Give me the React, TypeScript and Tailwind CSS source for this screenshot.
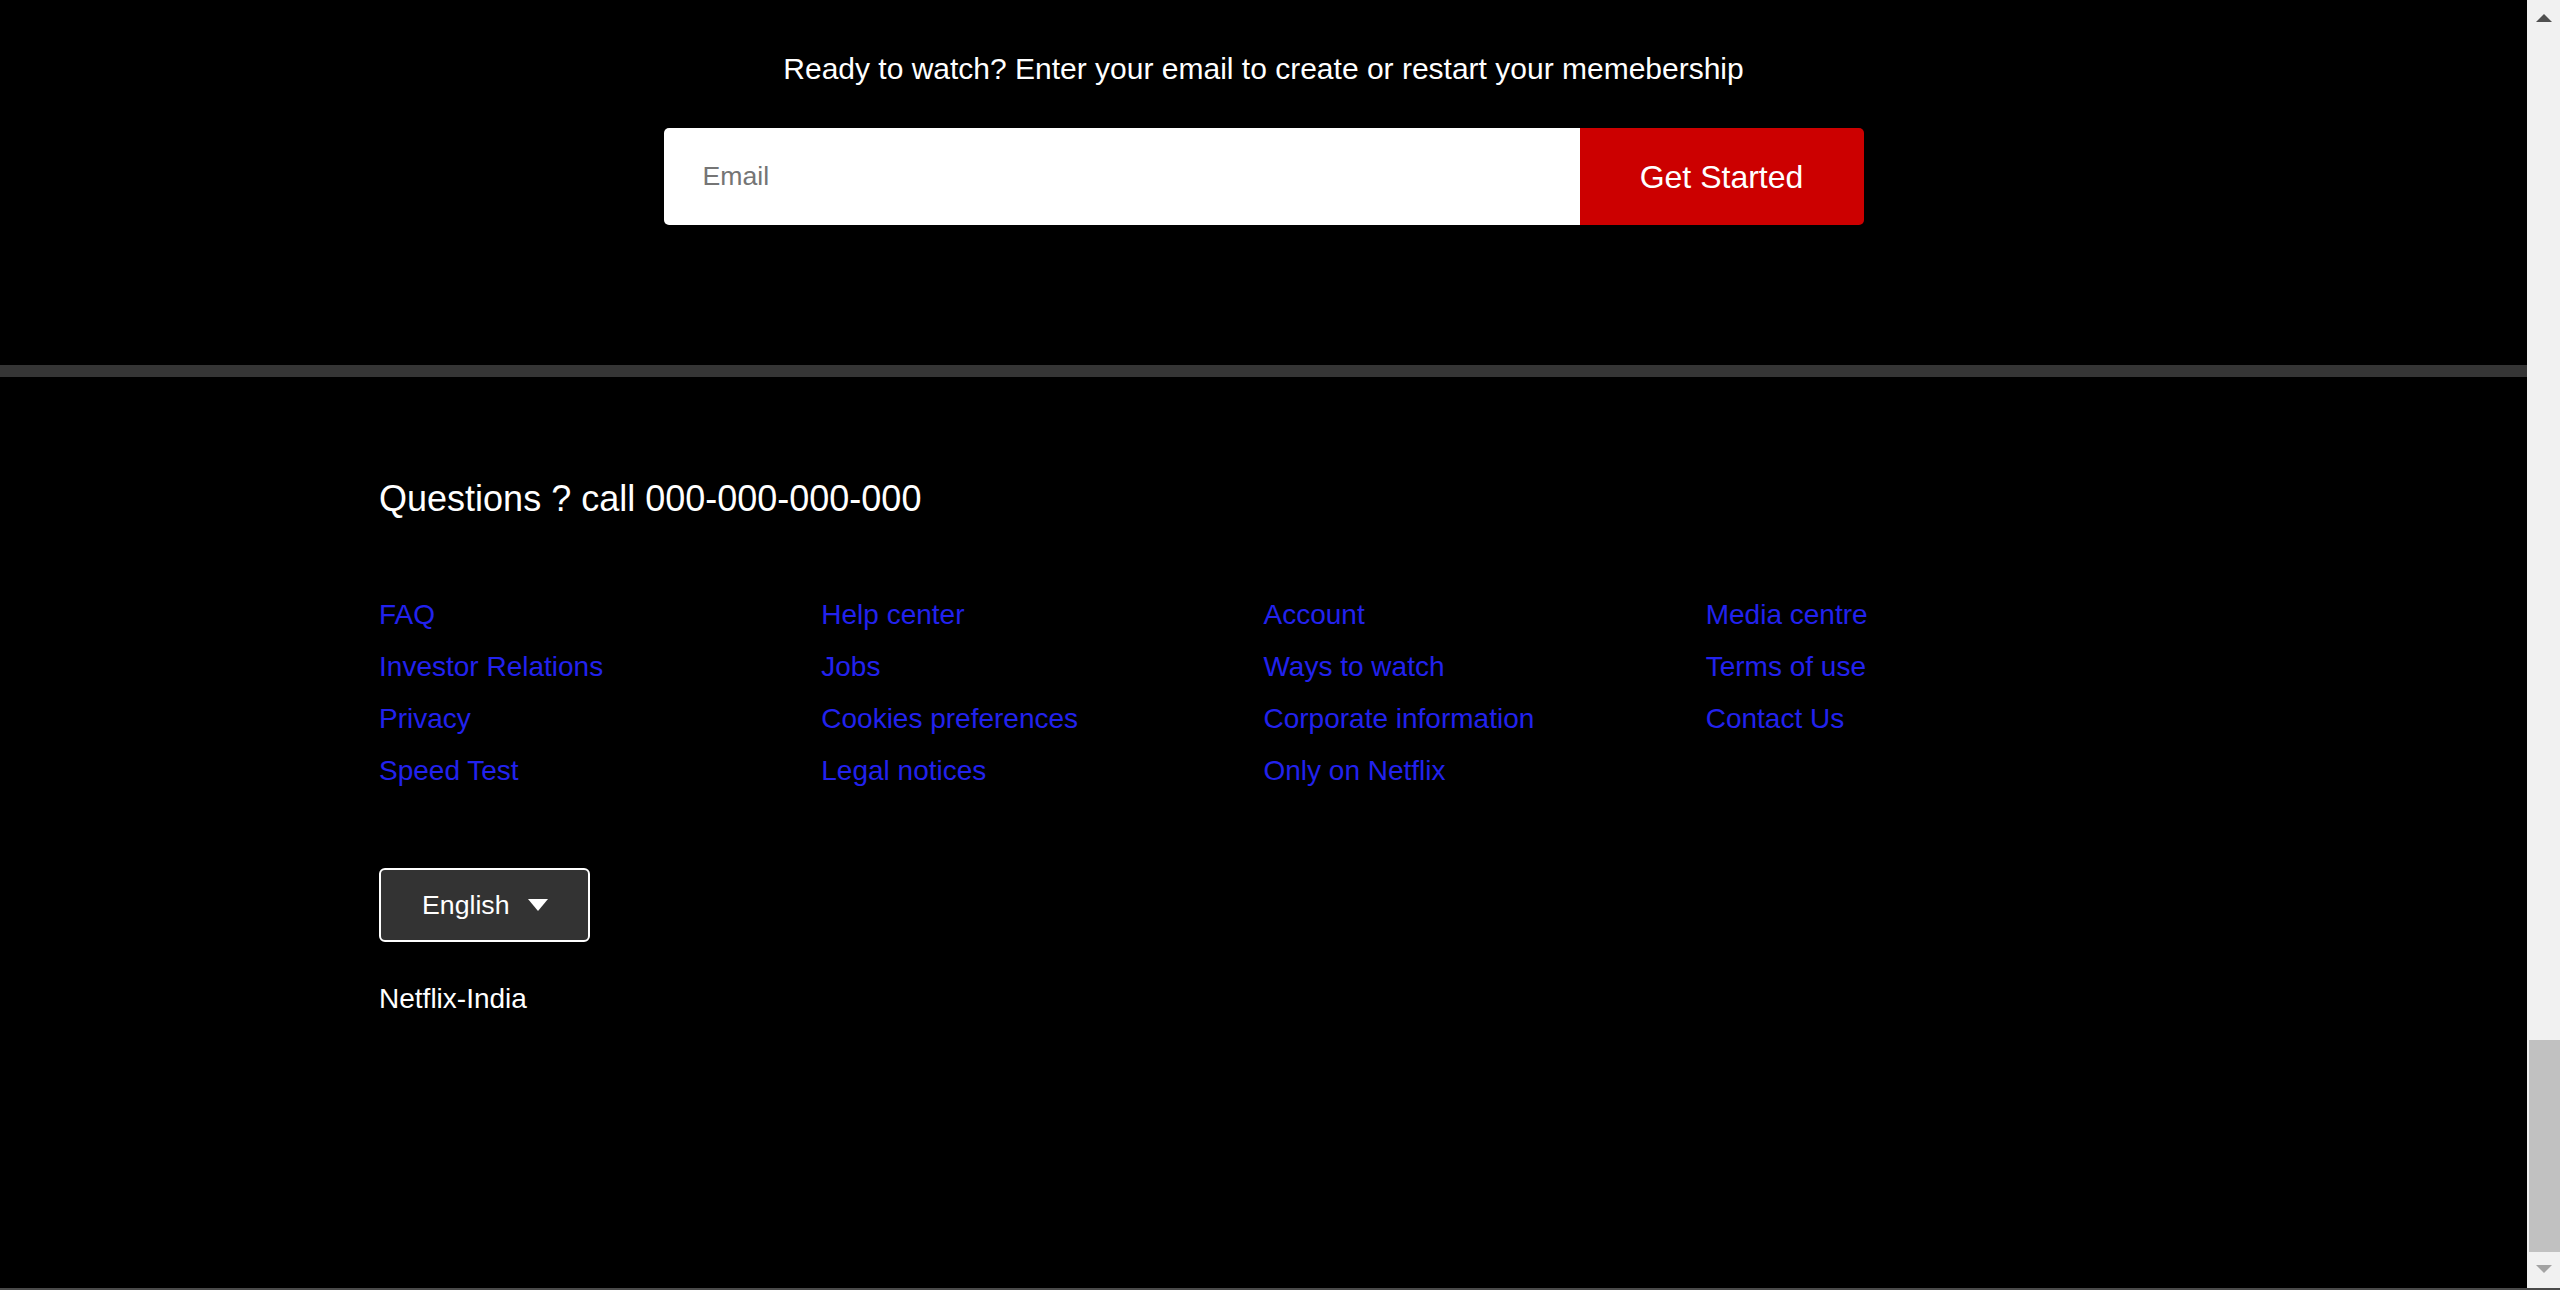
import React, { useState } from 'react';

const links = [
  ['FAQ', 'Investor Relations', 'Privacy', 'Speed Test'],
  ['Help center', 'Jobs', 'Cookies preferences', 'Legal notices'],
  ['Account', 'Ways to watch', 'Corporate information', 'Only on Netflix'],
  ['Media centre', 'Terms of use', 'Contact Us'],
];

export default function App() {
  const [email, setEmail] = useState('');

  return (
    <div className="flex h-[1290px] w-full flex-col overflow-hidden bg-black font-['Liberation_Sans',Arial,sans-serif]">
      <div className="flex min-h-0 flex-1">
        <main className="flex min-w-0 flex-1 flex-col">
          {/* Sign-up strip */}
          <section className="flex h-[365px] flex-col items-center pt-[52px]">
            <p className="text-[30px] leading-[34px] text-white">
              Ready to watch? Enter your email to create or restart your memebership
            </p>
            <form className="mt-[42px] flex h-[97px] w-[1200px]" onSubmit={(e) => e.preventDefault()}>
              <input
                type="email"
                value={email}
                onChange={(e) => setEmail(e.target.value)}
                placeholder="Email"
                className="min-w-0 flex-1 rounded-l-[5px] bg-white pl-[39px] text-[26.67px] text-black outline-none placeholder:text-[#757575]"
              />
              <button
                type="submit"
                className="w-[284px] rounded-r-[5px] bg-[#cc0000] text-[32px] text-white"
              >
                Get Started
              </button>
            </form>
          </section>

          <div className="h-[12px] bg-[#353535]"></div>

          {/* Footer */}
          <footer className="mx-auto w-[70%] pt-[101px]">
            <p className="text-[36px] leading-[41px] text-white">Questions ? call 000-000-000-000</p>

            <div className="mt-[70px] grid grid-cols-4">
              {links.map((col, i) => (
                <ul key={i} className="flex flex-col">
                  {col.map((l) => (
                    <li key={l} className="text-[28px] leading-[52px]">
                      <a href="#" className="text-[#2222ee]">{l}</a>
                    </li>
                  ))}
                </ul>
              ))}
            </div>

            <div className="mt-[71px] flex h-[74px] w-[211px] items-center gap-[19px] rounded-[6px] border-2 border-white bg-[#333333] pl-[41px] text-[26.67px] text-white">
              <span>English</span>
              <svg width="20" height="12" viewBox="0 0 20 12">
                <path d="M0 0 L20 0 L10 12 Z" fill="#ffffff" />
              </svg>
            </div>

            <p className="mt-[41px] text-[28px] leading-[32px] text-white">Netflix-India</p>
          </footer>
        </main>

        {/* Scrollbar, scrolled to the end */}
        <div className="flex w-[33px] flex-col bg-[#f1f1f1]">
          <div className="flex h-[36px] justify-center pt-[14px]">
            <svg width="16" height="8" viewBox="0 0 16 8">
              <path d="M0 8 L8 0 L16 8 Z" fill="#505050" />
            </svg>
          </div>
          <div className="flex flex-1 flex-col justify-end">
            <div className="ml-[2px] h-[212px] bg-[#c1c1c1]"></div>
          </div>
          <div className="flex h-[36px] justify-center pt-[13px]">
            <svg width="16" height="8" viewBox="0 0 16 8">
              <path d="M0 0 L16 0 L8 8 Z" fill="#a3a3a3" />
            </svg>
          </div>
        </div>
      </div>
      <div className="h-[2px] bg-[#4a4a4a]"></div>
    </div>
  );
}
